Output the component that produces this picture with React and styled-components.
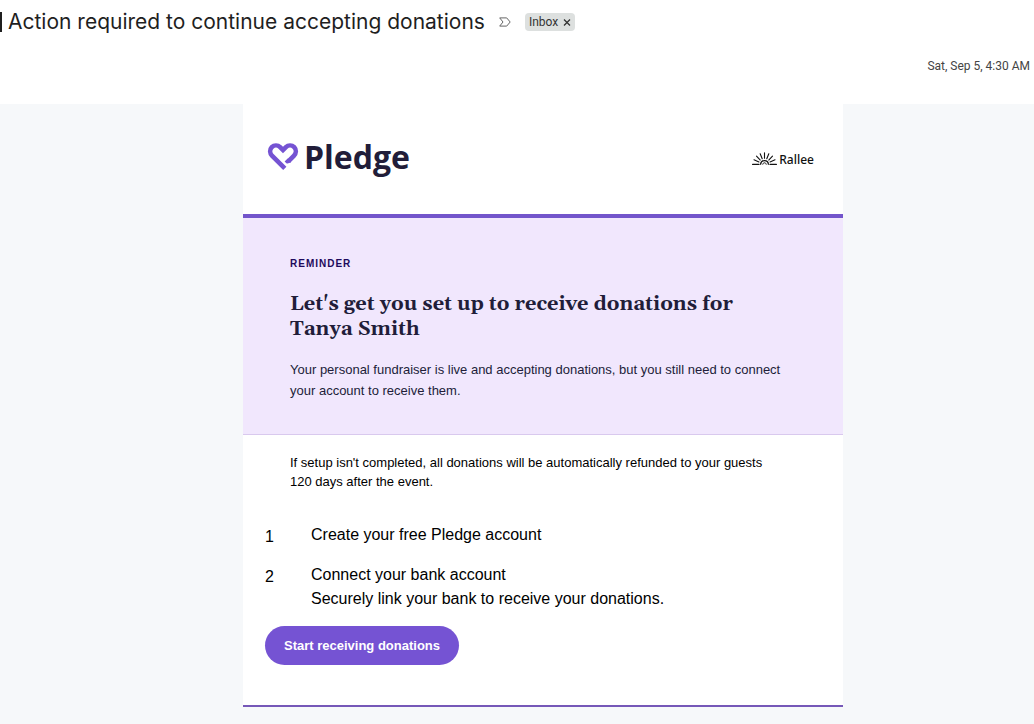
import styled, { createGlobalStyle } from "styled-components";

const steps = [
	{ title: "Create your free Pledge account" },
	{
		title: "Connect your bank account",
		detail: "Securely link your bank to receive your donations.",
	},
];

const rays = [24, 46, 68, 90, 112, 134, 156];

const PledgeHeart = () => (
	<svg width="32" height="30" viewBox="0 0 32 30" aria-hidden="true">
		<path
			d="M17.8 26.4 L5.2 14 C2.6 11.2 2.5 7.6 4.8 5.2 C7.2 2.8 10.8 2.9 13.1 5.2 L16 8.1 L18.9 5.2 C21.2 2.9 24.8 2.8 27.2 5.2 C29.5 7.6 29.4 11.2 26.8 14 L21.6 19.2"
			fill="none"
			stroke="#7553d3"
			strokeWidth="4.6"
		/>
		<path d="M17.6 19.4 L20.6 16.6 L24 20 C22.4 21.4 20.4 21.6 19.4 21.2 Z" fill="#7553d3" />
	</svg>
);

const RalleeSun = () => (
	<svg width="25" height="15" viewBox="0 0 25 15" aria-hidden="true">
		<g fill="none" stroke="#111111" strokeLinecap="round">
			<path d="M0.6 12.4 H7 M18 12.4 H24.4" strokeWidth="1.2" />
			<path
				d="M8.6 12.2 C8.8 10 10.4 8.6 12.5 8.6 C14.6 8.6 16.2 10 16.4 12.2"
				strokeWidth="1.3"
			/>
			<path d="M10.8 12.2 C11 11.2 11.6 10.8 12.5 10.8 C13.4 10.8 14 11.2 14.2 12.2" />
			{rays.map((angle) => (
				<path
					key={angle}
					d="M18.6 12.4 H24"
					strokeWidth="1.1"
					transform={`rotate(${-angle} 12.5 12.4)`}
				/>
			))}
		</g>
	</svg>
);

export default function App() {
	return (
		<>
			<GlobalStyle />
			<SubjectBar>
				<Caret />
				<Subject>Action required to continue accepting donations</Subject>
				<ImportanceButton aria-label="Importance">
					<svg width="12" height="10" viewBox="0 0 12 10">
						<path
							d="M0.7 0.9 H7.7 L11.2 5 L7.7 9.1 H0.7 L4 5 Z"
							fill="none"
							stroke="#666666"
						/>
					</svg>
				</ImportanceButton>
				<Label>
					Inbox
					<button aria-label="Remove label">
						<svg width="8" height="8" viewBox="0 0 8 8">
							<path d="M1 1.5 L7 7.5 M7 1.5 L1 7.5" stroke="#333" strokeWidth="1.3" />
						</svg>
					</button>
				</Label>
			</SubjectBar>
			<DateRow>
				<time>Sat, Sep 5, 4:30 AM</time>
			</DateRow>
			<MessageBody>
				<Card>
					<Brands>
						<Pledge>
							<PledgeHeart />
							Pledge
						</Pledge>
						<Rallee>
							<RalleeSun />
							Rallee
						</Rallee>
					</Brands>
					<Hero>
						<Eyebrow>REMINDER</Eyebrow>
						<h2>Let's get you set up to receive donations for Tanya Smith</h2>
						<p>
							Your personal fundraiser is live and accepting donations, but you
							still need to connect your account to receive them.
						</p>
					</Hero>
					<Notice>
						If setup isn't completed, all donations will be automatically
						refunded to your guests 120 days after the event.
					</Notice>
					<Steps>
						{steps.map((step, index) => (
							<Step key={step.title}>
								<StepNumber>{index + 1}</StepNumber>
								<div>
									<p>{step.title}</p>
									{step.detail && <p>{step.detail}</p>}
								</div>
							</Step>
						))}
					</Steps>
					<StartLink href="#start">Start receiving donations</StartLink>
				</Card>
			</MessageBody>
		</>
	);
}

const GlobalStyle = createGlobalStyle`
	* {
		box-sizing: border-box;
	}
	body {
		margin: 0;
		background-color: #ffffff;
		font-family: "Liberation Sans", Arial, sans-serif;
	}
	h1, h2, p, ol {
		margin: 0;
		padding: 0;
	}
	button {
		display: flex;
		padding: 0;
		border: none;
		background: none;
		cursor: pointer;
	}
`;

const SubjectBar = styled.header`
	display: flex;
	align-items: center;
	height: 44px;
`;

const Caret = styled.div`
	width: 2px;
	height: 20px;
	margin-right: 6px;
	background-color: #1f1f1f;
`;

const Subject = styled.h1`
	font-family: Inter, sans-serif;
	font-size: 21px;
	font-weight: 400;
	line-height: 28px;
	color: #1f1f1f;
	white-space: nowrap;
`;

const ImportanceButton = styled.button`
	margin: 0 14px;
`;

const Label = styled.div`
	display: flex;
	align-items: center;
	gap: 5px;
	height: 18px;
	padding: 0 4px;
	border-radius: 4px;
	background-color: #dde0df;
	color: #333333;
	font-family: Roboto, sans-serif;
	font-size: 12px;
`;

const DateRow = styled.div`
	display: flex;
	justify-content: flex-end;
	align-items: center;
	height: 44px;
	margin-bottom: 16px;
	padding-right: 4px;
	color: #444444;
	font-family: Roboto, sans-serif;
	font-size: 12px;
`;

const MessageBody = styled.main`
	min-height: calc(100vh - 104px);
	padding: 0 0 17px 52px;
	background-color: #f6f8fa;
`;

const Card = styled.article`
	max-width: 600px;
	margin: 0 auto;
	padding-bottom: 40px;
	border-bottom: 2px solid #7658b8;
	background-color: #ffffff;
`;

const Brands = styled.div`
	display: flex;
	justify-content: space-between;
	align-items: center;
	height: 114px;
	padding: 0 29px 0 24px;
	border-bottom: 4px solid #7355cb;
`;

const Pledge = styled.div`
	display: flex;
	align-items: center;
	gap: 5px;
	padding-bottom: 4px;
	color: #211d39;
	font-family: "Open Sans", sans-serif;
	font-size: 32px;
	font-weight: 700;
	line-height: 40px;
`;

const Rallee = styled.div`
	display: flex;
	align-items: center;
	gap: 2px;
	color: #111111;
	font-family: "Noto Sans", sans-serif;
	font-size: 12px;
	font-weight: 500;
`;

const Hero = styled.section`
	padding: 39px 47px 33px;
	border-bottom: 1px solid #d9c9ee;
	background-color: #f1e7fd;
	color: #211d39;
	h2 {
		margin: 21px 0 17px;
		font-family: Gelasio, Georgia, "Liberation Serif", serif;
		font-size: 20px;
		font-weight: 700;
		line-height: 25px;
	}
	p {
		font-size: 13px;
		line-height: 21px;
	}
`;

const Eyebrow = styled.div`
	color: #1e0a5c;
	font-size: 10px;
	font-weight: 700;
	letter-spacing: 1px;
	line-height: 14px;
`;

const Notice = styled.p`
	padding: 18px 64px 32px 47px;
	color: #000000;
	font-size: 13px;
	line-height: 19px;
`;

const Steps = styled.ol`
	display: grid;
	gap: 14px;
	padding: 0 22px;
	list-style: none;
`;

const Step = styled.li`
	display: grid;
	grid-template-columns: 46px 1fr;
	font-size: 16px;
	line-height: 24px;
`;

const StepNumber = styled.span`
	padding-top: 2px;
`;

const StartLink = styled.a`
	display: inline-block;
	margin: 15px 22px 0;
	padding: 0 19px;
	border-radius: 20px;
	background-color: #7553d3;
	color: #ffffff;
	font-size: 13px;
	font-weight: 700;
	line-height: 39px;
	text-decoration: none;
`;
